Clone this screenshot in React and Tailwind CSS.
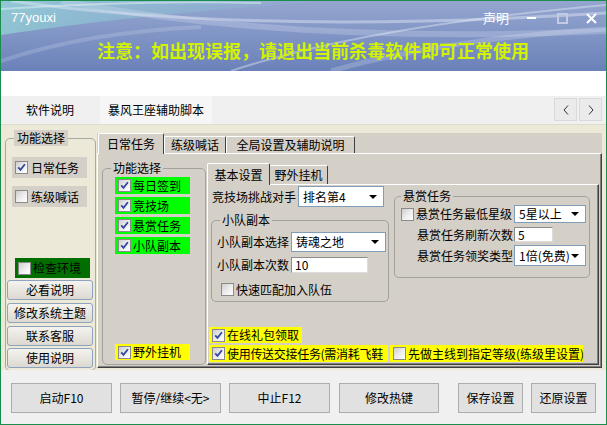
import React from "react";

function Check({ on }) {
  return (
    <span className="flex h-[13px] w-[13px] shrink-0 items-center justify-center border border-[#8a8a8a] bg-linear-to-br from-[#cdcdcd] via-[#ececec] to-white">
      {on && (
        <svg width="9" height="9" viewBox="0 0 9 9">
          <path d="M1.2 4.4 3.5 6.9 7.9 1.3" fill="none" stroke="#31489c" strokeWidth="1.8" />
        </svg>
      )}
    </span>
  );
}

function Select({ className, text }) {
  return (
    <div className={`flex items-center justify-between border border-[#7f9db9] bg-white pl-[4px] pr-[6px] ${className}`}>
      <span className="whitespace-nowrap">{text}</span>
      <svg width="8" height="4" viewBox="0 0 8 4">
        <path d="M0 0h8L4 4z" fill="#000" />
      </svg>
    </div>
  );
}

function Input({ className, text }) {
  return (
    <div className={`flex items-center border-l border-t border-b border-r border-l-[#8c8c8c] border-t-[#8c8c8c] border-r-[#dcdcdc] border-b-[#dcdcdc] bg-white pl-[3px] ${className}`}>
      {text}
    </div>
  );
}

function LeftBtn({ children, className }) {
  return (
    <div className={`flex h-[20px] w-[86px] items-center justify-center rounded-[3px] border border-[#8ea3bd] bg-linear-to-b from-[#f4f3ef] to-[#dcd9d1] ${className}`}>
      {children}
    </div>
  );
}

function BottomBtn({ children, className }) {
  return (
    <div className={`flex h-[30px] items-center justify-center border border-[#adadad] bg-[#e1e1e1] ${className}`}>
      {children}
    </div>
  );
}

export default function App() {
  return (
    <div className="flex h-[425px] w-[607px] flex-col overflow-hidden border border-[#1a8c4c] bg-[#f0f0f0] font-['Noto_Sans_CJK_SC',sans-serif] text-[12px] leading-[16px] text-black">
      {/* Banner */}
      <div className="relative h-[70px] shrink-0 overflow-hidden bg-linear-to-b from-[#7d93c5] to-[#6a81b9]">
        <svg className="absolute left-0 top-0" width="605" height="70" viewBox="0 0 605 70">
          <defs>
            <linearGradient id="teal" x1="0" y1="0" x2="1" y2="0">
              <stop offset="0" stopColor="#93d2d6" stopOpacity="0.75" />
              <stop offset="0.6" stopColor="#8cc6d6" stopOpacity="0.35" />
              <stop offset="1" stopColor="#8cc6d6" stopOpacity="0" />
            </linearGradient>
            <linearGradient id="glow" x1="0" y1="0" x2="0" y2="1">
              <stop offset="0" stopColor="#ffffff" stopOpacity="0.18" />
              <stop offset="1" stopColor="#ffffff" stopOpacity="0" />
            </linearGradient>
          </defs>
          <rect x="0" y="0" width="605" height="70" fill="url(#glow)" />
          <path d="M0 0 H330 C240 6 120 16 0 34 Z" fill="url(#teal)" />
          <path d="M0 8 C90 2 180 0 260 2" stroke="#d9f0f2" strokeOpacity="0.55" strokeWidth="2" fill="none" />
          <path d="M10 0 C140 18 320 30 605 12" stroke="#e4e9f6" strokeOpacity="0.45" strokeWidth="3" fill="none" />
          <path d="M60 0 C200 26 380 40 605 30" stroke="#e4e9f6" strokeOpacity="0.25" strokeWidth="6" fill="none" />
          <path d="M230 70 C320 40 450 18 605 4" stroke="#eef2fa" strokeOpacity="0.4" strokeWidth="2" fill="none" />
          <path d="M330 70 C400 50 500 34 605 28" stroke="#eef2fa" strokeOpacity="0.22" strokeWidth="5" fill="none" />
          <path d="M0 60 C60 40 120 30 200 26" stroke="#eef2fa" strokeOpacity="0.18" strokeWidth="4" fill="none" />
        </svg>
        <div className="relative flex h-[18px] items-center justify-between pl-[10px] pr-[9px] mt-[8px]">
          <span className="font-['Liberation_Sans',sans-serif] text-[13px] leading-[18px] text-white">77youxi</span>
          <div className="flex items-center">
            <span className="text-[13px] leading-[18px] text-white">声明</span>
            <span className="ml-[18px] block h-[2px] w-[9px] bg-white" />
            <span className="ml-[21px] block h-[11px] w-[11px] border-2 border-[#c3cbe4]" />
            <svg className="ml-[18px]" width="11" height="11" viewBox="0 0 11 11">
              <path d="M1 1 10 10M10 1 1 10" stroke="#fff" strokeWidth="2" />
            </svg>
          </div>
        </div>
        <div className="relative ml-[96px] mt-[12px] whitespace-nowrap text-[18px] font-bold leading-[22px] text-[#d2f200]">
          注意：如出现误报，请退出当前杀毒软件即可正常使用
        </div>
      </div>

      {/* White strip */}
      <div className="h-[25px] shrink-0 bg-white" />

      {/* Tab bar */}
      <div className="flex h-[29px] shrink-0 items-stretch border-b border-[#dedbd2] bg-[#f0f0f0]">
        <div className="flex w-[98px] items-center justify-center">软件说明</div>
        <div className="ml-[1px] flex w-[112px] items-center justify-center bg-[#f6f6f6]">暴风王座辅助脚本</div>
        <div className="ml-auto flex items-start pr-[4px] pt-[2px]">
          <div className="flex h-[23px] w-[23px] items-center justify-center border border-[#dadada] bg-[#ebebeb]">
            <svg width="6" height="10" viewBox="0 0 6 10">
              <path d="M5 0.5 1 5l4 4.5" stroke="#333" strokeWidth="1" fill="none" />
            </svg>
          </div>
          <div className="ml-[2px] flex h-[23px] w-[23px] items-center justify-center border border-[#dadada] bg-[#ebebeb]">
            <svg width="6" height="10" viewBox="0 0 6 10">
              <path d="M1 0.5 5 5 1 9.5" stroke="#333" strokeWidth="1" fill="none" />
            </svg>
          </div>
        </div>
      </div>

      {/* Content */}
      <div className="flex h-[245px] shrink-0 bg-[#ece9d8]">
        {/* Left groupbox */}
        <fieldset className="ml-[4px] mt-[5px] h-[241px] w-[91px] rounded-[5px] border border-[#a9a8a3]">
          <legend className="ml-[8px] bg-[#d4d0c8] px-[3px] leading-[16px]">功能选择</legend>
          <div className="flex flex-col">
            <div className="ml-[6px] mt-[11px] flex h-[21px] w-[75px] items-center gap-[3px] bg-[#d4d0c8] pl-[3px]">
              <Check on />
              <span>日常任务</span>
            </div>
            <div className="ml-[6px] mt-[8px] flex h-[21px] w-[75px] items-center gap-[3px] bg-[#d4d0c8] pl-[3px]">
              <Check />
              <span>练级喊话</span>
            </div>
            <div className="ml-[9px] mt-[51px] flex h-[20px] w-[75px] items-center gap-[2px] bg-[#006f00] pl-[3px]">
              <Check />
              <span>检查环境</span>
            </div>
            <LeftBtn className="ml-[1px] mt-[2px]">必看说明</LeftBtn>
            <LeftBtn className="ml-[1px] mt-[3px]">修改系统主题</LeftBtn>
            <LeftBtn className="ml-[1px] mt-[3px]">联系客服</LeftBtn>
            <LeftBtn className="ml-[1px] mt-[2px]">使用说明</LeftBtn>
          </div>
        </fieldset>

        {/* Main tab control */}
        <div className="ml-[1px] mt-[8px] flex h-[235px] w-[505px] flex-col">
          <div className="flex h-[20px] items-end bg-[#d4d0c8]">
            <div className="relative z-10 -mb-[1px] ml-[1px] flex h-[21px] w-[66px] items-center justify-center rounded-t-[2px] border-l border-r border-t border-l-white border-r-[#404040] border-t-white bg-[#d4d0c8]">
              日常任务
            </div>
            <div className="flex h-[17px] w-[62px] items-center justify-center rounded-t-[2px] border-l border-r border-t border-l-white border-r-[#404040] border-t-white">
              练级喊话
            </div>
            <div className="flex h-[17px] w-[129px] items-center justify-center rounded-t-[2px] border-l border-r border-t border-l-white border-r-[#404040] border-t-white">
              全局设置及辅助说明
            </div>
          </div>
          <div className="flex h-[215px] border-b border-l border-r border-t border-b-[#404040] border-l-white border-r-[#404040] border-t-white bg-[#d4d0c8] shadow-[inset_-1px_-1px_0_#808080]">
            {/* inner groupbox */}
            <fieldset className="ml-[4px] mt-[6px] h-[205px] w-[104px] rounded-[5px] border border-[#a3a29e]">
              <legend className="ml-[8px] px-[2px] leading-[16px]">功能选择</legend>
              <div className="flex h-full flex-col">
                <div className="ml-[12px] mt-[1px] flex h-[17px] w-[75px] items-center gap-[2px] bg-[#00ff00] pl-[3px]">
                  <Check on />
                  <span>每日签到</span>
                </div>
                <div className="ml-[12px] mt-[3px] flex h-[17px] w-[75px] items-center gap-[2px] bg-[#00ff00] pl-[3px]">
                  <Check on />
                  <span>竞技场</span>
                </div>
                <div className="ml-[12px] mt-[3px] flex h-[17px] w-[75px] items-center gap-[2px] bg-[#00ff00] pl-[3px]">
                  <Check on />
                  <span>悬赏任务</span>
                </div>
                <div className="ml-[12px] mt-[3px] flex h-[17px] w-[75px] items-center gap-[2px] bg-[#00ff00] pl-[3px]">
                  <Check on />
                  <span>小队副本</span>
                </div>
                <div className="mb-[4px] ml-[12px] mt-auto flex h-[16px] w-[75px] items-center gap-[2px] bg-[#ffff00] pl-[3px]">
                  <Check on />
                  <span>野外挂机</span>
                </div>
              </div>
            </fieldset>

            {/* inner tab control */}
            <div className="ml-[1px] mt-[9px] flex h-[202px] w-[392px] flex-col">
              <div className="flex h-[21px] items-end">
                <div className="relative z-10 -mb-[1px] flex h-[22px] w-[63px] items-center justify-center rounded-t-[2px] border-l border-r border-t border-l-white border-r-[#404040] border-t-white bg-[#d4d0c8]">
                  基本设置
                </div>
                <div className="flex h-[19px] w-[58px] items-center justify-center rounded-t-[2px] border-r border-t border-r-[#404040] border-t-white">
                  野外挂机
                </div>
              </div>
              <div className="flex h-[181px] flex-col border-b border-l border-r border-t border-b-[#404040] border-l-white border-r-[#404040] border-t-white shadow-[inset_-1px_-1px_0_#808080]">
                <div className="flex">
                  {/* left column */}
                  <div className="flex w-[181px] flex-col">
                    <div className="mt-[1px] flex h-[21px] items-center pl-[4px]">
                      <span className="whitespace-nowrap">竞技场挑战对手</span>
                      <Select className="ml-[2px] h-[21px] w-[86px]" text="排名第4" />
                    </div>
                    <fieldset className="ml-[3px] mt-[5px] h-[90px] w-[178px] rounded-[5px] border border-[#a3a29e]">
                      <legend className="ml-[8px] px-[2px] leading-[16px]">小队副本</legend>
                      <div className="flex flex-col">
                        <div className="ml-[5px] mt-[4px] flex h-[20px] items-center">
                          <span className="whitespace-nowrap">小队副本选择</span>
                          <Select className="ml-[2px] h-[20px] w-[95px]" text="铸魂之地" />
                        </div>
                        <div className="ml-[5px] mt-[5px] flex h-[16px] items-center">
                          <span className="whitespace-nowrap">小队副本次数</span>
                          <Input className="ml-[2px] h-[16px] w-[77px]" text="10" />
                        </div>
                        <div className="ml-[9px] mt-[10px] flex h-[13px] items-center gap-[2px]">
                          <Check />
                          <span className="whitespace-nowrap">快速匹配加入队伍</span>
                        </div>
                      </div>
                    </fieldset>
                  </div>
                  {/* right column */}
                  <fieldset className="ml-[5px] mt-[3px] h-[90px] w-[196px] rounded-[5px] border border-[#a3a29e]">
                    <legend className="ml-[6px] px-[2px] leading-[16px]">悬赏任务</legend>
                    <div className="flex flex-col">
                      <div className="ml-[6px] mt-[1px] flex h-[18px] items-center">
                        <Check />
                        <span className="ml-[2px] whitespace-nowrap">悬赏任务最低星级</span>
                        <Select className="ml-[2px] h-[18px] w-[72px]" text="5星以上" />
                      </div>
                      <div className="ml-[22px] mt-[4px] flex h-[15px] items-center">
                        <span className="whitespace-nowrap">悬赏任务刷新次数</span>
                        <Input className="ml-[1px] h-[15px] w-[39px]" text="5" />
                      </div>
                      <div className="ml-[22px] mt-[3px] flex h-[21px] items-center">
                        <span className="whitespace-nowrap">悬赏任务领奖类型</span>
                        <Select className="ml-[1px] h-[21px] w-[72px]" text="1倍(免费)" />
                      </div>
                    </div>
                  </fieldset>
                </div>

                {/* bottom yellow rows */}
                <div className="mb-[2px] ml-[1px] mt-auto flex flex-col gap-[2px]">
                  <div className="flex h-[16px] w-[93px] items-center gap-[2px] bg-[#ffff00] pl-[3px]">
                    <Check on />
                    <span className="whitespace-nowrap">在线礼包领取</span>
                  </div>
                  <div className="flex h-[17px] gap-[2px]">
                    <div className="flex w-[179px] items-center gap-[2px] overflow-hidden bg-[#ffff00] pl-[3px]">
                      <Check on />
                      <span className="whitespace-nowrap tracking-[-0.3px]">使用传送交接任务(需消耗飞鞋</span>
                    </div>
                    <div className="flex w-[193px] items-center gap-[2px] bg-[#ffff00] pl-[3px]">
                      <Check />
                      <span className="whitespace-nowrap">先做主线到指定等级(练级里设置)</span>
                    </div>
                  </div>
                </div>
              </div>
            </div>
          </div>
        </div>
      </div>

      {/* Bottom bar */}
      <div className="flex flex-1 items-start bg-[#f0f0f0] pl-[10px] pt-[13px]">
        <BottomBtn className="w-[101px]">启动F10</BottomBtn>
        <BottomBtn className="ml-[8px] w-[101px]">暂停/继续&lt;无&gt;</BottomBtn>
        <BottomBtn className="ml-[8px] w-[101px]">中止F12</BottomBtn>
        <BottomBtn className="ml-[9px] w-[100px]">修改热键</BottomBtn>
        <BottomBtn className="ml-[19px] w-[65px]">保存设置</BottomBtn>
        <BottomBtn className="ml-[8px] w-[65px]">还原设置</BottomBtn>
      </div>
    </div>
  );
}
